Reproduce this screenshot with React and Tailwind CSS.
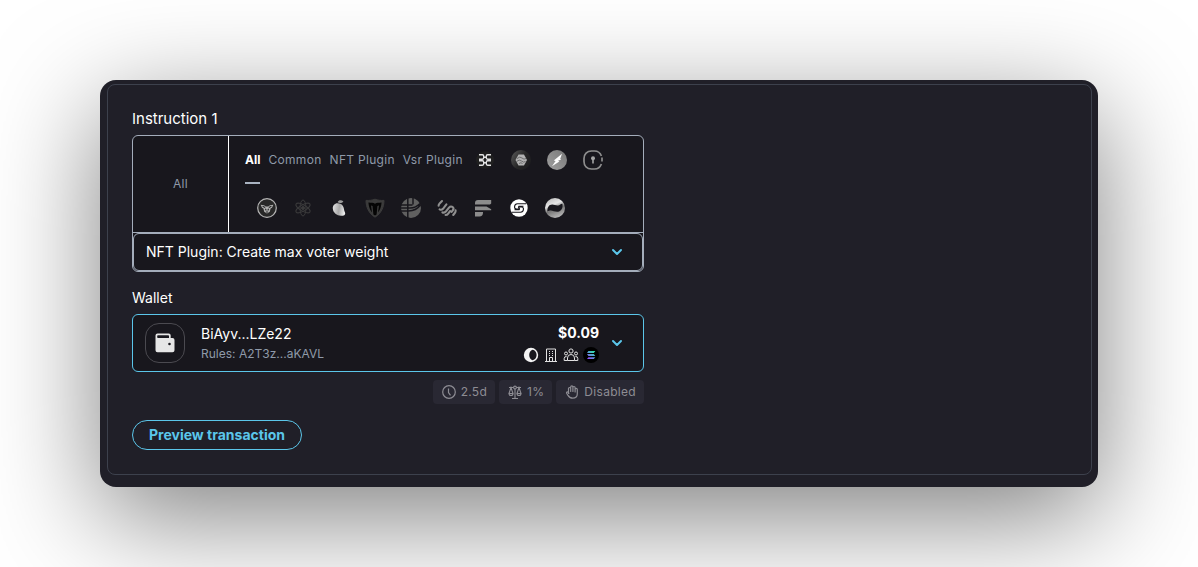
import React from "react";

function Chevron({ className }) {
  return (
    <svg viewBox="0 0 12 8" className={className} fill="none" stroke="currentColor" strokeWidth="2" strokeLinecap="round" strokeLinejoin="round" aria-hidden="true">
      <path d="M2 2l4 4 4-4" />
    </svg>
  );
}

function Mark({ children }) {
  return (
    <svg viewBox="0 0 20 20" className="size-5" fill="none" aria-hidden="true">
      {children}
    </svg>
  );
}

const KnotMark = () => (
  <Mark>
    <circle cx="10" cy="10" r="9" fill="#202020" />
    <g stroke="#e4e4e4" strokeWidth="1.4">
      <path d="M4 4.800h3.400q1.300 0 1.300 1.400v1.600q0 1.400-1.300 1.400H4M4 15.200h3.400q1.300 0 1.300-1.400v-1.600q0-1.400-1.300-1.400H4" />
      <path d="M16 4.800h-3.400q-1.300 0-1.300 1.400v1.600q0 1.400 1.300 1.400H16M16 15.200h-3.400q-1.300 0-1.300-1.400v-1.600q0-1.400 1.300-1.400H16" />
      <path d="M8.700 7.200h2.600M8.700 12.800h2.600" />
    </g>
  </Mark>
);

const OrbMark = () => (
  <Mark>
    <defs>
      <linearGradient id="orb" x1="0" y1="0" x2="1" y2="0.6">
        <stop offset="0" stopColor="#5c5c5c" />
        <stop offset="0.6" stopColor="#262626" />
        <stop offset="1" stopColor="#1e1e20" />
      </linearGradient>
    </defs>
    <circle cx="10" cy="10" r="10" fill="url(#orb)" />
    <path d="M7.500 4.500h5.500l3 5.500-3 5.500H7.500L4.500 10z" fill="#b2b2b2" />
    <path d="M6 8.500q3-2.500 5-.5t4 .5M5.500 11.500q3-2.500 5-.5t4 .5M8 13.500q2-1.500 3.500 0" stroke="#5c5c5c" strokeWidth="0.8" />
  </Mark>
);

const BoltMark = () => (
  <Mark>
    <defs>
      <linearGradient id="bolt" x1="0" y1="1" x2="1" y2="0">
        <stop offset="0" stopColor="#a0a0a0" />
        <stop offset="1" stopColor="#787878" />
      </linearGradient>
    </defs>
    <circle cx="10" cy="10" r="10" fill="url(#bolt)" />
    <path d="M15 3.800L6.800 10.400l1.800.6L5 16.200l7.400-4.600-1.400-.8 3.200-1.400-1-.4z" fill="#fff" />
  </Mark>
);

const LockMark = () => (
  <Mark>
    <path d="M18.400 6C17.200 2.800 14.800 1 11.500 1h-3C4 1 1 4 1 8.500v3C1 16 4 19 8.500 19h3c3.300 0 5.700-1.800 6.900-5M19 7.500v4" stroke="#8d8d8d" strokeWidth="1.700" />
    <circle cx="10" cy="8.300" r="2" fill="#a5a5a5" />
    <path d="M9.200 9h1.600v4.600H9.200z" fill="#a5a5a5" />
  </Mark>
);

const WolfMark = () => (
  <Mark>
    <circle cx="10" cy="10" r="9.300" fill="#282828" stroke="#b5b5b5" strokeWidth="1.200" />
    <path d="M3.600 6.800l3.400.4 1.800 1.400h2.400L13 7.200l3.400-.4-1.400 3-1.400.6-.8 3.400L10 15.400l-2.800-1.600-.8-3.400-1.400-.6z" fill="#b0b0b0" />
    <path d="M5.600 8.200l2.600 1.400M14.400 8.200l-2.600 1.400M8.400 10.800l.8 1.600M11.600 10.800l-.8 1.600M9 14h2" stroke="#282828" strokeWidth="1.100" />
  </Mark>
);

const AtomMark = () => (
  <Mark>
    <g stroke="#3a3a3b" strokeWidth="1">
      <ellipse cx="10" cy="10" rx="3" ry="8" />
      <ellipse cx="10" cy="10" rx="3" ry="8" transform="rotate(60 10 10)" />
      <ellipse cx="10" cy="10" rx="3" ry="8" transform="rotate(120 10 10)" />
      <circle cx="10" cy="10" r="1.500" fill="#3a3a3b" />
    </g>
  </Mark>
);

const FruitMark = () => (
  <Mark>
    <defs>
      <linearGradient id="fruit" x1="0" y1="0.400" x2="1" y2="0.600">
        <stop offset="0" stopColor="#dedede" />
        <stop offset="0.500" stopColor="#a8a8a8" />
        <stop offset="1" stopColor="#f2f2f2" />
      </linearGradient>
    </defs>
    <path d="M8.600 5.200C6 5 3.600 7.400 3.800 10.600 4 14.800 8 17.800 12 17.800c3 0 4.400-1 4.200-2.600-.2-1.400-1-2-1.200-4-.3-3.400-2.400-5.800-6.400-6z" fill="url(#fruit)" />
    <path d="M8.600 4.200C9.600 2 12.400 1.800 14.400 3.400 13 5.200 10.400 5.400 8.600 4.200z" fill="#9c9c9c" />
  </Mark>
);

const ShieldMark = () => (
  <Mark>
    <path d="M10 1.200c2.600 1 5.800 1.400 9 1.200 0 6.800-2.800 13-9 16.800C3.800 15.400 1 9.200 1 2.400c3.200.2 6.400-.2 9-1.200z" fill="#3b3b3b" stroke="#3b3b3b" strokeWidth="1" />
    <path d="M3.400 4.600c3 .2 4.600.2 6.600 1.200 2-1 3.600-1 6.600-1.200-.4 4.200-1.600 7.600-3.600 10l1-7-1.600.4-.8 8.400L10 17.400l-1.600-1-.8-8.400L6 7.600l1 7c-2-2.400-3.200-5.800-3.600-10z" fill="#050505" />
  </Mark>
);

const GridBallMark = () => (
  <Mark>
    <circle cx="10" cy="10" r="10" fill="#606060" />
    <path d="M6.800 0v20M12 0v6.500M0 7h11.500M0 13h7.500q8 0 12.300-6.500M0 9.900h9q6 0 10-4.500" stroke="#18171d" strokeWidth="1.500" />
  </Mark>
);

const WaveMark = () => (
  <Mark>
    <g stroke="#8f8f8f" strokeWidth="2.100" strokeLinecap="round" strokeLinejoin="round">
      <path d="M1.600 7.800q0-1.400 1-2.400L5 3" />
      <path d="M2.600 11.400q2 1 3.400-.6l3.400-4.400" />
      <path d="M5.400 14.400q2.200.8 3.600-1l3-3.800q1.600-1.800 3.600-.6 1.600 1.200.4 3l-1.400 1.800" />
      <path d="M8.600 17q1.600 0 2.600-1.400l2-2.600M18.600 12.400q.2 1.400-.8 2.600l-1.600 2" />
    </g>
  </Mark>
);

const FlagMark = () => (
  <Mark>
    <path d="M5 2h13.200v3.400L17 6.400H2V5a3 3 0 0 1 3-3zM2 8.400h11.500l4.700 2.800v1H2zM2 14h8v.8a3.600 3.600 0 0 1-3.600 3.600H2z" fill="#8c8c8c" />
  </Mark>
);

const CoilMark = () => (
  <Mark>
    <circle cx="10" cy="10" r="8.700" fill="#fff" />
    <path d="M17 5.800H8.500a3.300 3.300 0 0 0-3 3.200c0 1.400 1 2 2.200 2H10M3 14.200h8.500a3.300 3.300 0 0 0 3-3.200c0-1.400-1-2-2.200-2H10M14.500 8.300H9.800a1.300 1.300 0 0 0 0 1.700l.6.4M5.500 11.700h4.700a1.300 1.300 0 0 0 0-1.700" stroke="#18171d" strokeWidth="1.100" />
  </Mark>
);

const SwirlMark = () => (
  <Mark>
    <defs>
      <linearGradient id="swirl" x1="0.200" y1="0" x2="0.600" y2="1">
        <stop offset="0" stopColor="#bcbcbc" />
        <stop offset="0.350" stopColor="#e6e6e6" />
        <stop offset="0.600" stopColor="#777" />
        <stop offset="1" stopColor="#b8b8b8" />
      </linearGradient>
    </defs>
    <circle cx="10" cy="10" r="10" fill="url(#swirl)" />
    <path d="M2.400 13.500C2.200 9.200 4.200 6.400 7.400 6.600c3 .2 5.200 2.200 8.600-.6l1.400-.2c.8 4-1 7.400-4.400 8-3.600.6-6.600-2.800-10.600-.3z" fill="#18171d" />
  </Mark>
);

const topMarks = [
  ["Knot", KnotMark],
  ["Orb", OrbMark],
  ["Bolt", BoltMark],
  ["Lock", LockMark],
];

const bottomMarks = [
  ["Wolf", WolfMark],
  ["Atom", AtomMark],
  ["Fruit", FruitMark],
  ["Shield", ShieldMark],
  ["Grid", GridBallMark],
  ["Wave", WaveMark],
  ["Flag", FlagMark],
  ["Coil", CoilMark],
  ["Swirl", SwirlMark],
];

function MarkButton({ label, Icon }) {
  return (
    <button type="button" aria-label={label} className="flex h-12 w-9 items-center justify-center">
      <Icon />
    </button>
  );
}

function TextTab({ children, active }) {
  return (
    <button
      type="button"
      aria-pressed={!!active}
      className={
        active
          ? "mx-1 h-12 border-y-2 border-t-transparent border-b-[#a9b3c1] text-xs font-bold text-white"
          : "mx-1 h-12 text-xs tracking-wide text-[#8f9aa9]"
      }
    >
      {children}
    </button>
  );
}

function WalletIcon() {
  return (
    <svg viewBox="0 0 20 20" className="size-5" aria-hidden="true">
      <path fillRule="evenodd" fill="#e6e6e6" d="M2.500.5h11.200a2 2 0 0 1 2 2V5h1.800a2 2 0 0 1 2 2v10.200a2 2 0 0 1-2 2h-15a2 2 0 0 1-2-2V2.500a2 2 0 0 1 2-2zm.5 1.800a.8.800 0 0 0-.8.800v1.100a.8.800 0 0 0 .8.800h11V3.100a.8.800 0 0 0-.8-.8zM14.500 9.700a1.300 1.300 0 1 0 0 2.600 1.300 1.300 0 0 0 0-2.600z" />
    </svg>
  );
}

function MoonIcon() {
  return (
    <svg viewBox="0 0 16 16" className="size-4" aria-hidden="true">
      <circle cx="8" cy="8" r="7.200" fill="#f3f3f3" />
      <path d="M9.600 2.800c2.400.4 4 2.600 4 5.200s-1.600 4.800-4 5.200C7.400 12.400 6.200 10.400 6.200 8s1.200-4.400 3.400-5.200z" fill="#18171d" />
    </svg>
  );
}

function BuildingIcon() {
  return (
    <svg viewBox="0 0 16 16" className="size-4" fill="none" stroke="#e2e2e2" aria-hidden="true">
      <path d="M3.500 14V2h9v12M2 14.500h12" />
      <path d="M6.500 14v-3.500h3V14" />
      <path d="M6 4.500h1M9 4.500h1M6 6.500h1M9 6.500h1M6 8.500h1M9 8.500h1" />
    </svg>
  );
}

function PeopleIcon() {
  return (
    <svg viewBox="0 0 16 16" className="size-4" fill="none" stroke="#e2e2e2" aria-hidden="true">
      <circle cx="8" cy="4" r="2.100" />
      <circle cx="3" cy="6.500" r="1.500" />
      <circle cx="13" cy="6.500" r="1.500" />
      <path d="M4.500 13.500V11a3.500 3.500 0 0 1 7 0v2.500z" />
      <path d="M4.500 13.500h-3.300V11.500A2 2 0 0 1 3.600 9.600M11.500 13.500h3.300V11.500a2 2 0 0 0-2.400-1.900" />
    </svg>
  );
}

function SolanaIcon() {
  return (
    <svg viewBox="0 0 16 16" className="size-4" aria-hidden="true">
      <defs>
        <linearGradient id="sol" gradientUnits="userSpaceOnUse" x1="5" y1="12" x2="11" y2="4">
          <stop offset="0" stopColor="#9945ff" />
          <stop offset="0.500" stopColor="#5a9ad8" />
          <stop offset="1" stopColor="#2ce6a6" />
        </linearGradient>
      </defs>
      <circle cx="8" cy="8" r="8" fill="#000" />
      <path fill="url(#sol)" d="M5.400 4H12.300L10.800 5.900H4zM4 7.100h6.800L12.300 9H5.400zM5.400 10.200H12.300L10.800 12.100H4z" />
    </svg>
  );
}

function TimeIcon() {
  return (
    <svg viewBox="0 0 16 16" className="size-4" fill="none" stroke="currentColor" strokeWidth="1.200" aria-hidden="true">
      <circle cx="8" cy="8" r="6.300" />
      <path d="M7.500 4.500v4l2 2.800" />
    </svg>
  );
}

function ScalesIcon() {
  return (
    <svg viewBox="0 0 16 16" className="size-4" fill="none" stroke="currentColor" strokeWidth="1.100" aria-hidden="true">
      <path d="M8 5v9.500M5 14.500h6M2 3.500h4.500M9.500 3.500H14" />
      <circle cx="8" cy="3.500" r="1.400" />
      <path d="M4 3.500L2 9.500h4zM12 3.500l-2 6h4zM2 9.500a2 2 0 0 0 4 0M10 9.500a2 2 0 0 0 4 0" />
    </svg>
  );
}

function HandIcon() {
  return (
    <svg viewBox="0 0 16 16" className="size-4" fill="none" stroke="currentColor" strokeWidth="1.200" strokeLinejoin="round" strokeLinecap="round" aria-hidden="true">
      <path d="M4.500 9.500V4.600a1.100 1.100 0 0 1 2.200 0V7.500M6.700 7.500V3a1.100 1.100 0 0 1 2.200 0v4.500M8.900 7.500V3.600a1.100 1.100 0 0 1 2.200 0V8M11.100 8V5.400a1.100 1.100 0 0 1 2.200 0v4.400c0 2.700-1.800 4.400-4.600 4.400-2.400 0-3.700-.9-4.700-2.800L2.600 9.200c-.4-1 .8-1.700 1.500-.9l.8 1" />
    </svg>
  );
}

function Tag({ icon, children }) {
  return (
    <li className="flex h-6 items-center gap-1 rounded bg-[#292833] px-2 text-xs tracking-wide text-[#8e8d94]">
      {icon}
      <span>{children}</span>
    </li>
  );
}

export default function App() {
  return (
    <div className="min-h-screen bg-white px-[100px] py-20 font-['Inter',sans-serif]">
      <main className="rounded-2xl bg-[#201f28] pt-1 pr-1.5 pb-3 pl-[7px] shadow-[0_30px_110px_rgba(0,0,0,0.5)]">
        <form className="rounded-lg border border-[#3d414d] p-6" onSubmit={(e) => e.preventDefault()}>
          <div className="w-full max-w-lg">
            <label htmlFor="instruction" className="block text-[15px] leading-5 text-white">
              Instruction 1
            </label>
            <div className="mt-1.5 rounded-md border border-[#a4adbb] bg-[#18171d]">
              <div className="flex border-b border-[#a4adbb]">
                <div className="flex w-24 shrink-0 items-center justify-center border-r border-white text-xs tracking-wide text-[#8f9aa9]">
                  All
                </div>
                <div className="min-w-0 flex-1 px-3">
                  <div className="flex">
                    <TextTab active>All</TextTab>
                    <TextTab>Common</TextTab>
                    <TextTab>NFT Plugin</TextTab>
                    <TextTab>Vsr Plugin</TextTab>
                    {topMarks.map(([label, Icon]) => (
                      <MarkButton key={label} label={label} Icon={Icon} />
                    ))}
                  </div>
                  <div className="flex pl-2">
                    {bottomMarks.map(([label, Icon]) => (
                      <MarkButton key={label} label={label} Icon={Icon} />
                    ))}
                  </div>
                </div>
              </div>
              <div className="relative">
                <select
                  id="instruction"
                  className="block h-[38px] w-full appearance-none rounded-md border border-[#a4adbb] bg-[#18171d] px-3 text-sm text-white"
                >
                  <option>NFT Plugin: Create max voter weight</option>
                </select>
                <Chevron className="pointer-events-none absolute top-[15px] right-5 h-2 w-3 text-[#5bc6ea]" />
              </div>
            </div>

            <label htmlFor="wallet" className="mt-4 block text-sm leading-5 text-white">
              Wallet
            </label>
            <button
              id="wallet"
              type="button"
              aria-haspopup="listbox"
              className="mt-1.5 flex w-full items-center rounded-md border border-[#5bc6ea] bg-[#18171d] py-2 pr-5 pl-3 text-left"
            >
              <span className="flex size-10 items-center justify-center rounded-[14px] border border-[#4b4a50]">
                <WalletIcon />
              </span>
              <span className="ml-4 flex flex-1 flex-col">
                <span className="text-sm leading-[22px] text-white">BiAyv...LZe22</span>
                <span className="text-xs leading-[18px] text-[#8f9aa9]">Rules: A2T3z...aKAVL</span>
              </span>
              <span className="flex flex-col items-end">
                <span className="text-sm leading-5 font-bold text-white">$0.09</span>
                <span className="flex h-5 items-center gap-1 pt-1">
                  <MoonIcon />
                  <BuildingIcon />
                  <PeopleIcon />
                  <SolanaIcon />
                </span>
              </span>
              <Chevron className="ml-3 h-2 w-3 text-[#5bc6ea]" />
            </button>

            <ul className="mt-2 flex justify-end gap-1">
              <Tag icon={<TimeIcon />}>2.5d</Tag>
              <Tag icon={<ScalesIcon />}>1%</Tag>
              <Tag icon={<HandIcon />}>Disabled</Tag>
            </ul>

            <button
              type="submit"
              className="mt-4 flex h-[30px] items-center rounded-full border border-[#5bc6ea] px-4 text-sm font-bold text-[#5bc6ea]"
            >
              Preview transaction
            </button>
          </div>
        </form>
      </main>
    </div>
  );
}
